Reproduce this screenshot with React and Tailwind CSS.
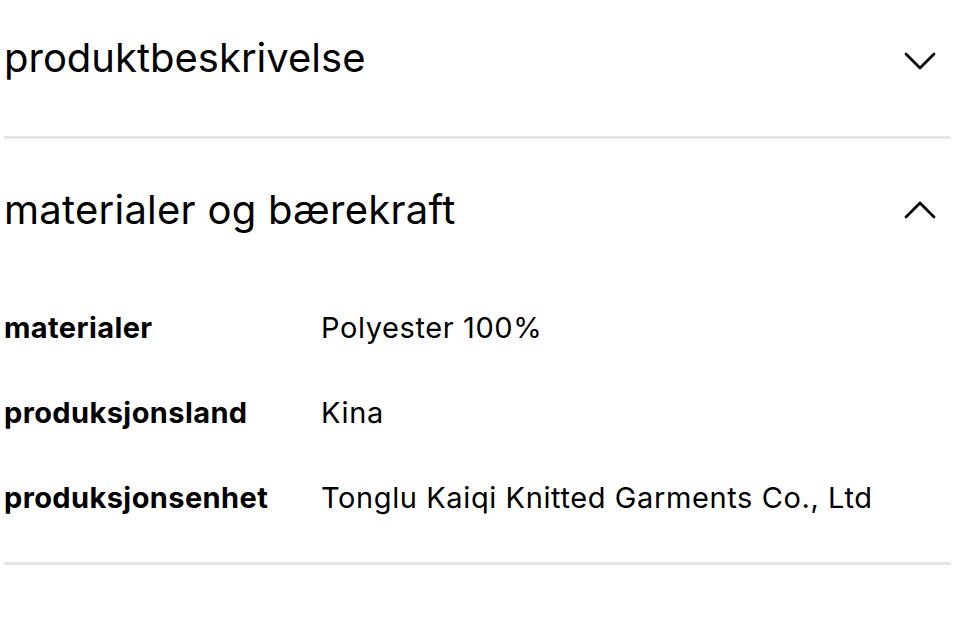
const DETAILS = [
  { label: 'materialer', value: 'Polyester 100%' },
  { label: 'produksjonsland', value: 'Kina' },
  { label: 'produksjonsenhet', value: 'Tonglu Kaiqi Knitted Garments Co., Ltd' },
];

function Chevron({ open }) {
  return (
    <svg width="32" height="20" viewBox="0 0 32 20" fill="none" aria-hidden className="shrink-0">
      <polyline
        points={open ? '2,17 16,3 30,17' : '2,3 16,17 30,3'}
        stroke="#000"
        strokeWidth="2.8"
        strokeLinecap="round"
        strokeLinejoin="round"
      />
    </svg>
  );
}

export default function App() {
  return (
    <div className="min-h-[626px] bg-white pl-[4px] pr-[9px] text-black" style={{ fontFamily: 'Inter, "Noto Sans", sans-serif' }}>
      {/* closed section */}
      <section className="border-b-[3px] border-[#e6e6e6]">
        <button type="button" className="flex h-[136px] w-full items-center justify-between pb-[20px] text-left">
          <h2 className="text-[40px] font-normal leading-none">produktbeskrivelse</h2>
          <span className="mr-[15px] mt-[6px]"><Chevron /></span>
        </button>
      </section>

      {/* open section */}
      <section className="border-b-[3px] border-[#e6e6e6]">
        <button type="button" className="flex h-[148px] w-full items-center justify-between pt-[2px] pb-[8px] text-left">
          <h2 className="text-[40px] font-normal leading-none tracking-[0.25px]">materialer og bærekraft</h2>
          <span className="mr-[15px]"><Chevron open /></span>
        </button>
        <dl className="flex flex-col gap-[52px] pt-[24px] pb-[48px]">
          {DETAILS.map((row) => (
            <div key={row.label} className="flex items-baseline text-[29px] leading-[33px]">
              <dt className="w-[317px] shrink-0 font-bold tracking-[0.4px]">{row.label}</dt>
              <dd className="tracking-[0.6px]">{row.value}</dd>
            </div>
          ))}
        </dl>
      </section>
    </div>
  );
}
